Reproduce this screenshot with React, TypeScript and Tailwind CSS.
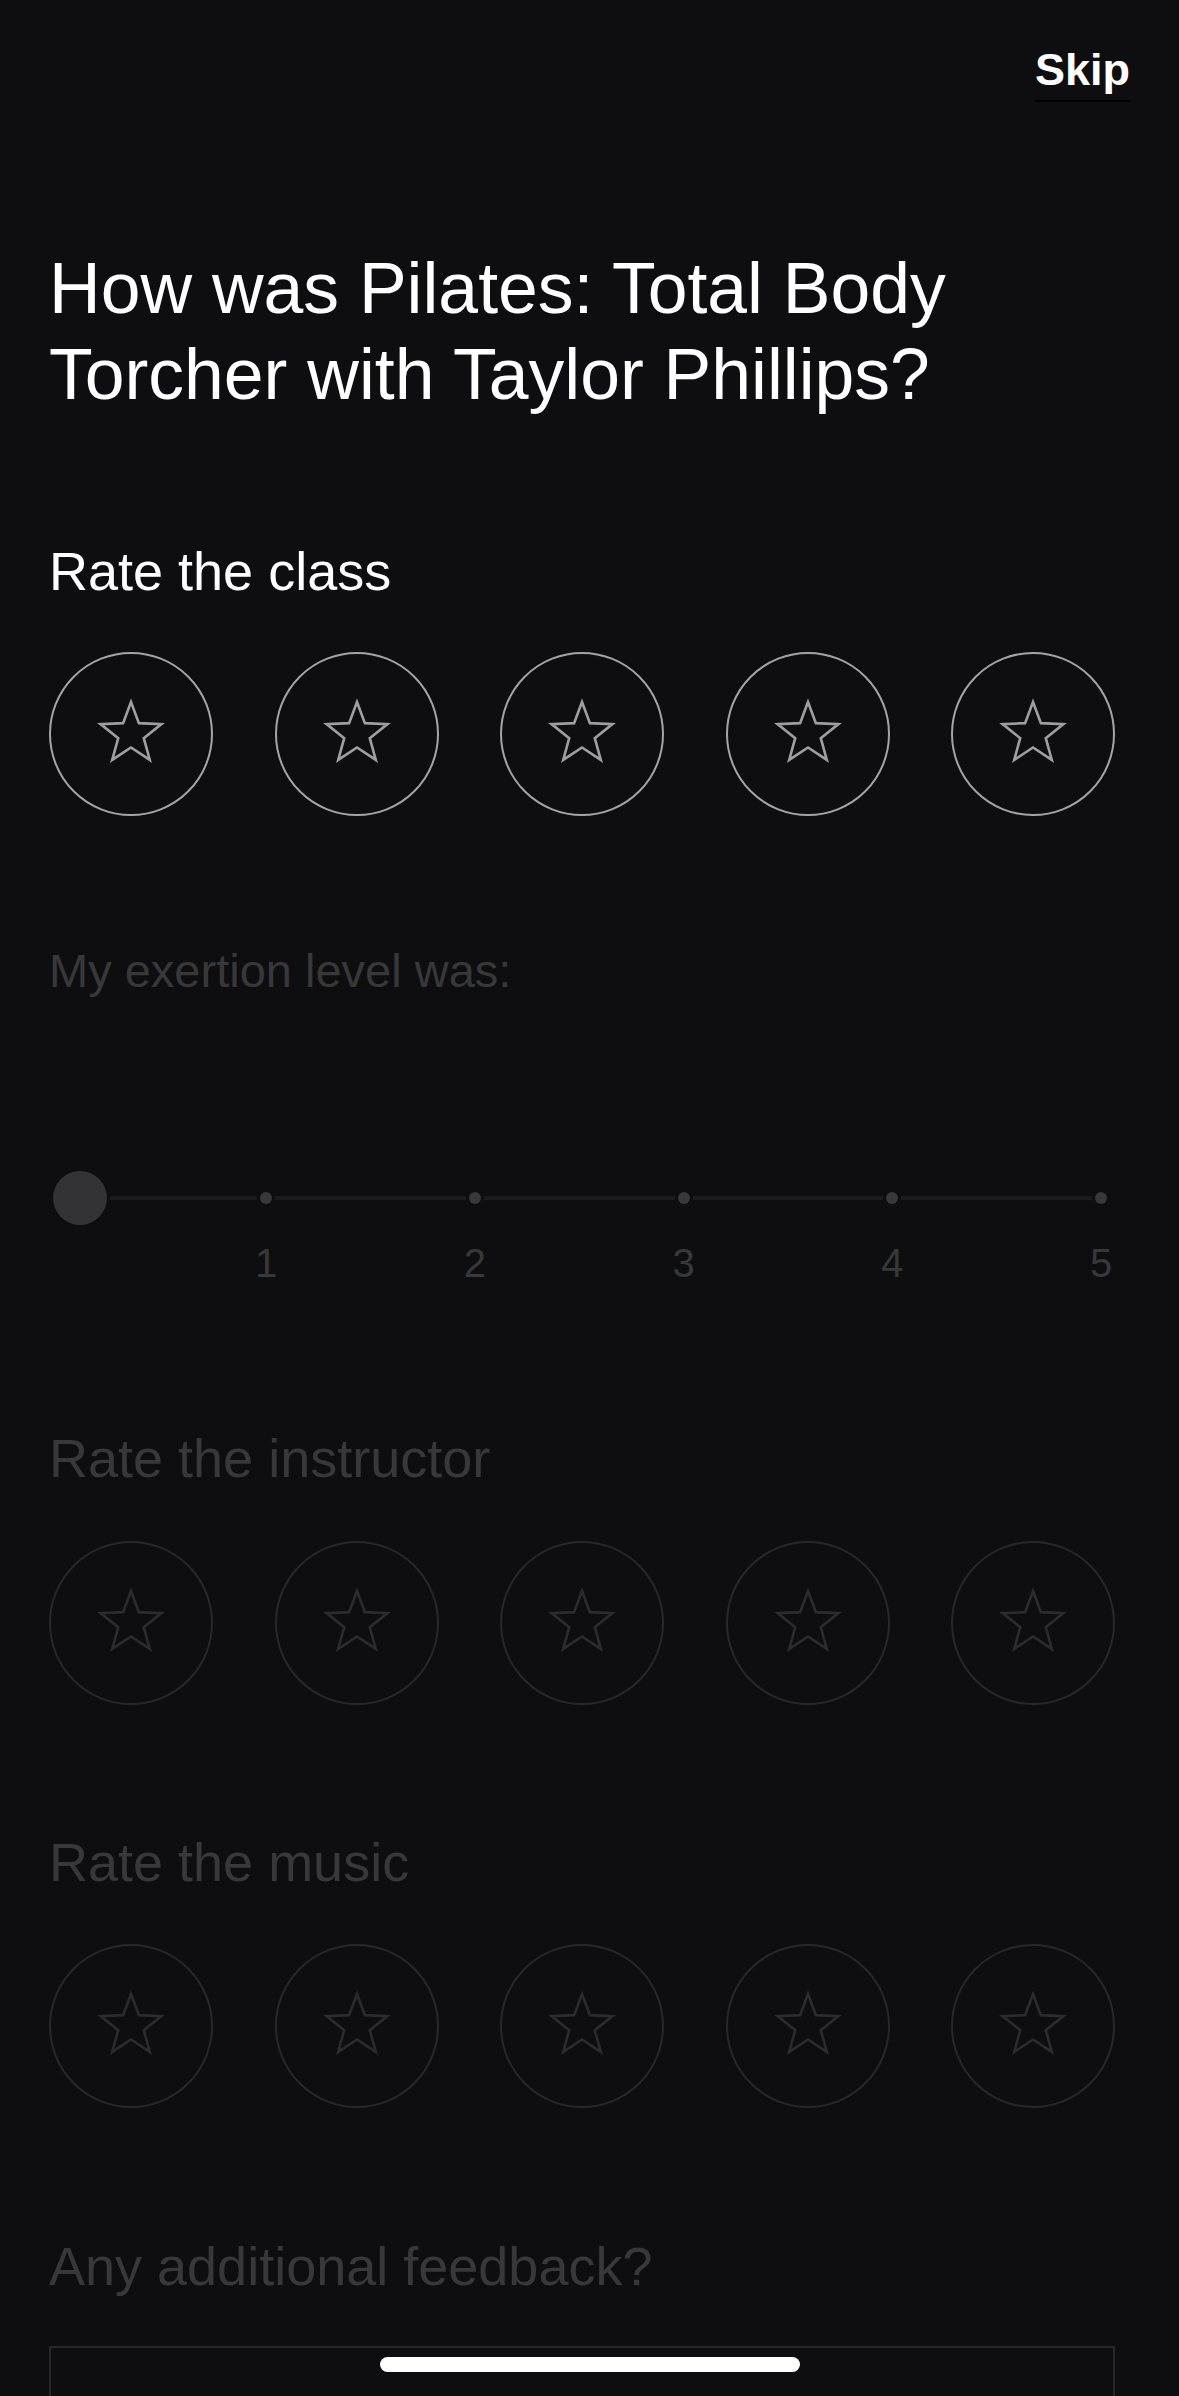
import React from "react";

const FONT = { fontFamily: '"Liberation Sans", Arial, Helvetica, sans-serif' };

function Star({ color }: { color: string }) {
  const cx = 34;
  const cy = 34;
  const R = 32;
  const r = 32 * 0.42;
  const pts: string[] = [];
  for (let i = 0; i < 10; i++) {
    const rad = i % 2 === 0 ? R : r;
    const a = (Math.PI / 5) * i - Math.PI / 2;
    pts.push(`${(cx + rad * Math.cos(a)).toFixed(2)},${(cy + rad * Math.sin(a)).toFixed(2)}`);
  }
  return (
    <svg width="68" height="68" viewBox="0 0 68 68" className="overflow-visible">
      <polygon points={pts.join(" ")} fill="none" stroke={color} strokeWidth="2.6" strokeLinejoin="miter" />
    </svg>
  );
}

function StarRow({ active }: { active: boolean }) {
  return (
    <div className="flex gap-[61.5px]">
      {[0, 1, 2, 3, 4].map((i) => (
        <div
          key={i}
          className={
            active
              ? "w-[164px] h-[164px] rounded-full border-[2px] border-[#a4a4a6] flex items-center justify-center"
              : "w-[164px] h-[164px] rounded-full border-[2px] border-[#28282a] flex items-center justify-center"
          }
        >
          <Star color={active ? "#9f9fa1" : "#2c2c2e"} />
        </div>
      ))}
    </div>
  );
}

function Segment({ first }: { first?: boolean }) {
  return (
    <div className={first ? "w-[165px] flex items-center" : "flex-1 flex items-center"}>
      <div className="flex-1 h-[4px] bg-[#1b1b1d] mx-[3px]" />
      <div className="w-[12px] h-[12px] rounded-full bg-[#38383a]" />
    </div>
  );
}

export default function App() {
  return (
    <div style={FONT} className="relative w-[1179px] h-[2396px] overflow-hidden bg-[#0e0e10] text-white">
      <div className="px-[49px]">
        {/* Header */}
        <div className="flex justify-end pt-[45px]">
          <div className="border-b-[2px] border-black pb-[5px]">
            <span className="block text-[45px] leading-[50px] font-bold">Skip</span>
          </div>
        </div>

        {/* Title */}
        <h1 className="mt-[143px] text-[71.5px] leading-[86px] font-normal">
          How was Pilates: Total Body Torcher with Taylor Phillips?
        </h1>

        {/* Rate the class */}
        <div className="mt-[123px] text-[54px] leading-[62px]">Rate the class</div>
        <div className="mt-[50px]">
          <StarRow active />
        </div>

        {/* Exertion */}
        <div className="mt-[128px] text-[47px] leading-[54px] text-[#38383a]">My exertion level was:</div>
        <div className="mt-[173px] ml-[4px] mr-[23px]">
          <div className="flex items-center h-[54px]">
            <div className="w-[54px] h-[54px] rounded-full bg-[#333335]" />
            <Segment first />
            <Segment />
            <Segment />
            <Segment />
            <Segment />
          </div>
          <div className="flex mt-[15px] text-[40px] leading-[46px] text-[#38383a]">
            <div className="w-[54px]" />
            {[1, 2, 3, 4, 5].map((n, i) => (
              <div key={n} className={i === 0 ? "w-[165px] flex justify-end" : "flex-1 flex justify-end"}>
                <div className="w-[12px] flex justify-center">
                  <span>{n}</span>
                </div>
              </div>
            ))}
          </div>
        </div>

        {/* Rate the instructor */}
        <div className="mt-[141px] text-[54px] leading-[62px] text-[#38383a]">Rate the instructor</div>
        <div className="mt-[52px]">
          <StarRow active={false} />
        </div>

        {/* Rate the music */}
        <div className="mt-[126px] text-[54px] leading-[62px] text-[#38383a]">Rate the music</div>
        <div className="mt-[51px]">
          <StarRow active={false} />
        </div>

        {/* Feedback */}
        <div className="mt-[127px] text-[54px] leading-[62px] text-[#38383a]">Any additional feedback?</div>
        <div className="mt-[49px] mr-[15px] h-[320px] border-[2px] border-[#28282a]" />
      </div>

      {/* Home indicator */}
      <div className="absolute left-1/2 -translate-x-1/2 bottom-[24px] w-[420px] h-[15px] rounded-full bg-white" />
    </div>
  );
}
